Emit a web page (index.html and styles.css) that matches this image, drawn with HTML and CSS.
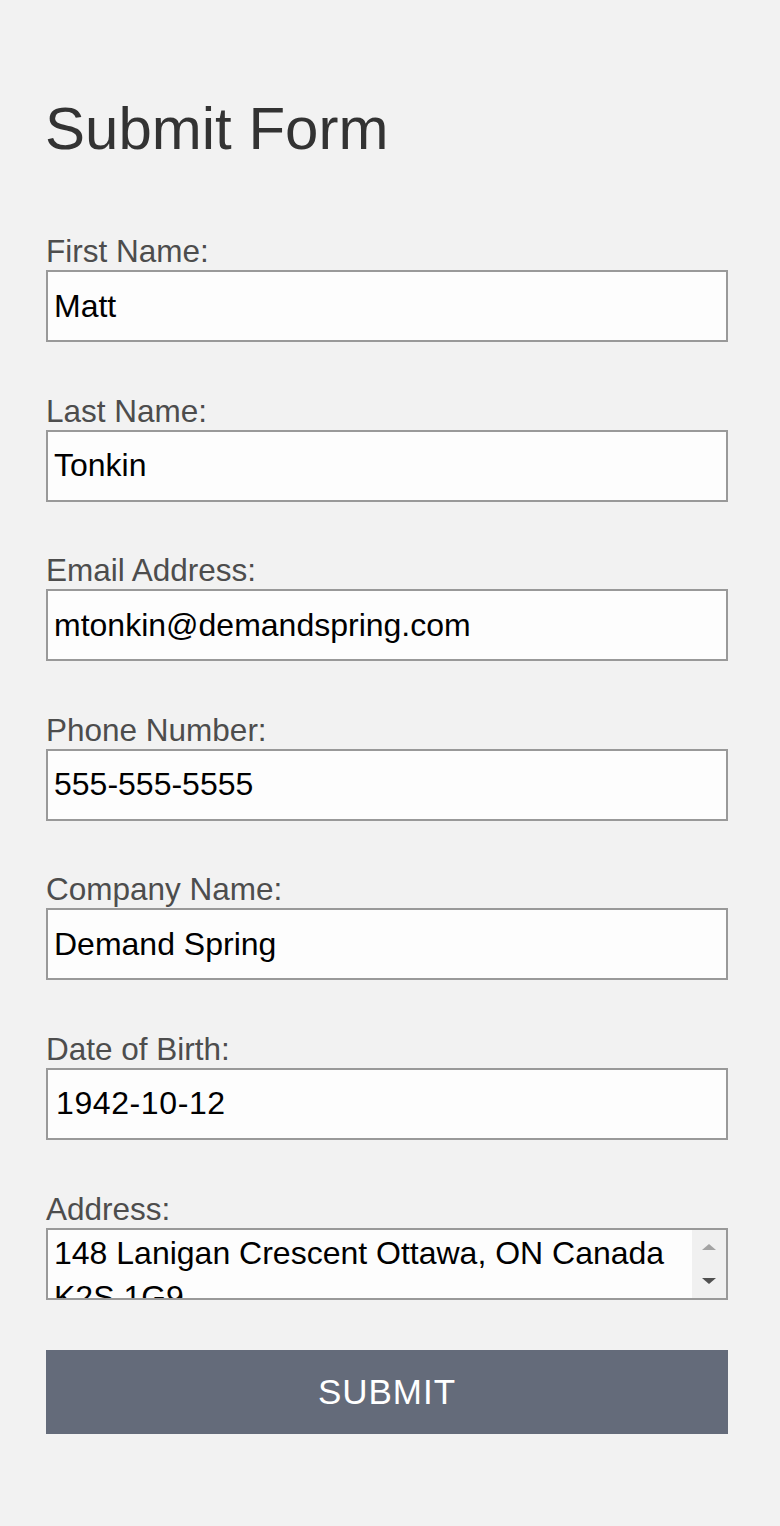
FILE: index.html
```html
<!DOCTYPE html>
<html>
	<head>
		<meta charset="utf-8">
		<title>Submit Form</title>
		<link rel="stylesheet" href="styles.css">
	</head>
	<body>
		<form class="form">
			<h1 class="title">Submit Form</h1>

			<label class="label" for="first">First Name:</label>
			<input class="field" id="first" type="text" value="Matt">

			<label class="label" for="last">Last Name:</label>
			<input class="field" id="last" type="text" value="Tonkin">

			<label class="label" for="email">Email Address:</label>
			<input class="field" id="email" type="text" value="mtonkin@demandspring.com">

			<label class="label" for="phone">Phone Number:</label>
			<input class="field" id="phone" type="text" value="555-555-5555">

			<label class="label" for="company">Company Name:</label>
			<input class="field" id="company" type="text" value="Demand Spring">

			<label class="label" for="dob">Date of Birth:</label>
			<input class="field date" id="dob" type="text" value="1942-10-12">

			<label class="label" for="address">Address:</label>
			<div class="area">
				<textarea class="area-text" id="address">148 Lanigan Crescent Ottawa, ON Canada K2S 1G9</textarea>
				<div class="scroll">
					<span class="arrow up"></span>
					<span class="arrow down"></span>
				</div>
			</div>

			<button class="submit" type="button">SUBMIT</button>
		</form>
	</body>
</html>
```

FILE: styles.css
```css
body, html{
	background-color: #f2f2f2;
	margin: 0;
}
body{
	font-family: "Liberation Sans", Arial, sans-serif;
	min-height: 1526px;
}
.form{
	width: 682px;
	padding: 94px 0 0 46px;
	display: flex;
	flex-direction: column;
}
.title{
	font-size: 60px;
	font-weight: normal;
	line-height: 70px;
	color: #333333;
	margin: 0 0 69px -1px;
}
.label{
	font-size: 31.5px;
	line-height: 37px;
	color: #4d4d4d;
}
.field{
	box-sizing: border-box;
	height: 72px;
	width: 682px;
	margin: 0 0 50.6px 0;
	padding: 0 6px;
	border: 2px solid #999999;
	background-color: #fdfdfd;
	font-family: "Liberation Sans", Arial, sans-serif;
	font-size: 32px;
	color: #000000;
	outline: none;
}
.date{
	padding-left: 8px;
	letter-spacing: 0.6px;
}
.area{
	box-sizing: border-box;
	height: 72px;
	width: 682px;
	border: 2px solid #999999;
	background-color: #fdfdfd;
	display: flex;
}
.area-text{
	flex: 1;
	border: none;
	margin: 0;
	padding: 1px 6px 0 6px;
	background: transparent;
	font-family: "Liberation Sans", Arial, sans-serif;
	font-size: 32px;
	line-height: 44px;
	color: #000000;
	resize: none;
	overflow: hidden;
	outline: none;
}
.scroll{
	width: 34px;
	background-color: #f0f0f0;
	display: flex;
	flex-direction: column;
	align-items: center;
	justify-content: space-between;
	padding: 14px 0 14px 0;
}
.arrow{
	width: 0;
	height: 0;
	border-left: 7px solid transparent;
	border-right: 7px solid transparent;
}
.up{
	border-bottom: 6px solid #a3a3a3;
}
.down{
	border-top: 6px solid #505050;
}
.submit{
	margin-top: 50.5px;
	width: 682px;
	height: 84px;
	border: none;
	background-color: #646b7a;
	color: #ffffff;
	font-family: "Liberation Sans", Arial, sans-serif;
	font-size: 35px;
	letter-spacing: 1px;
	padding: 0;
}
```
